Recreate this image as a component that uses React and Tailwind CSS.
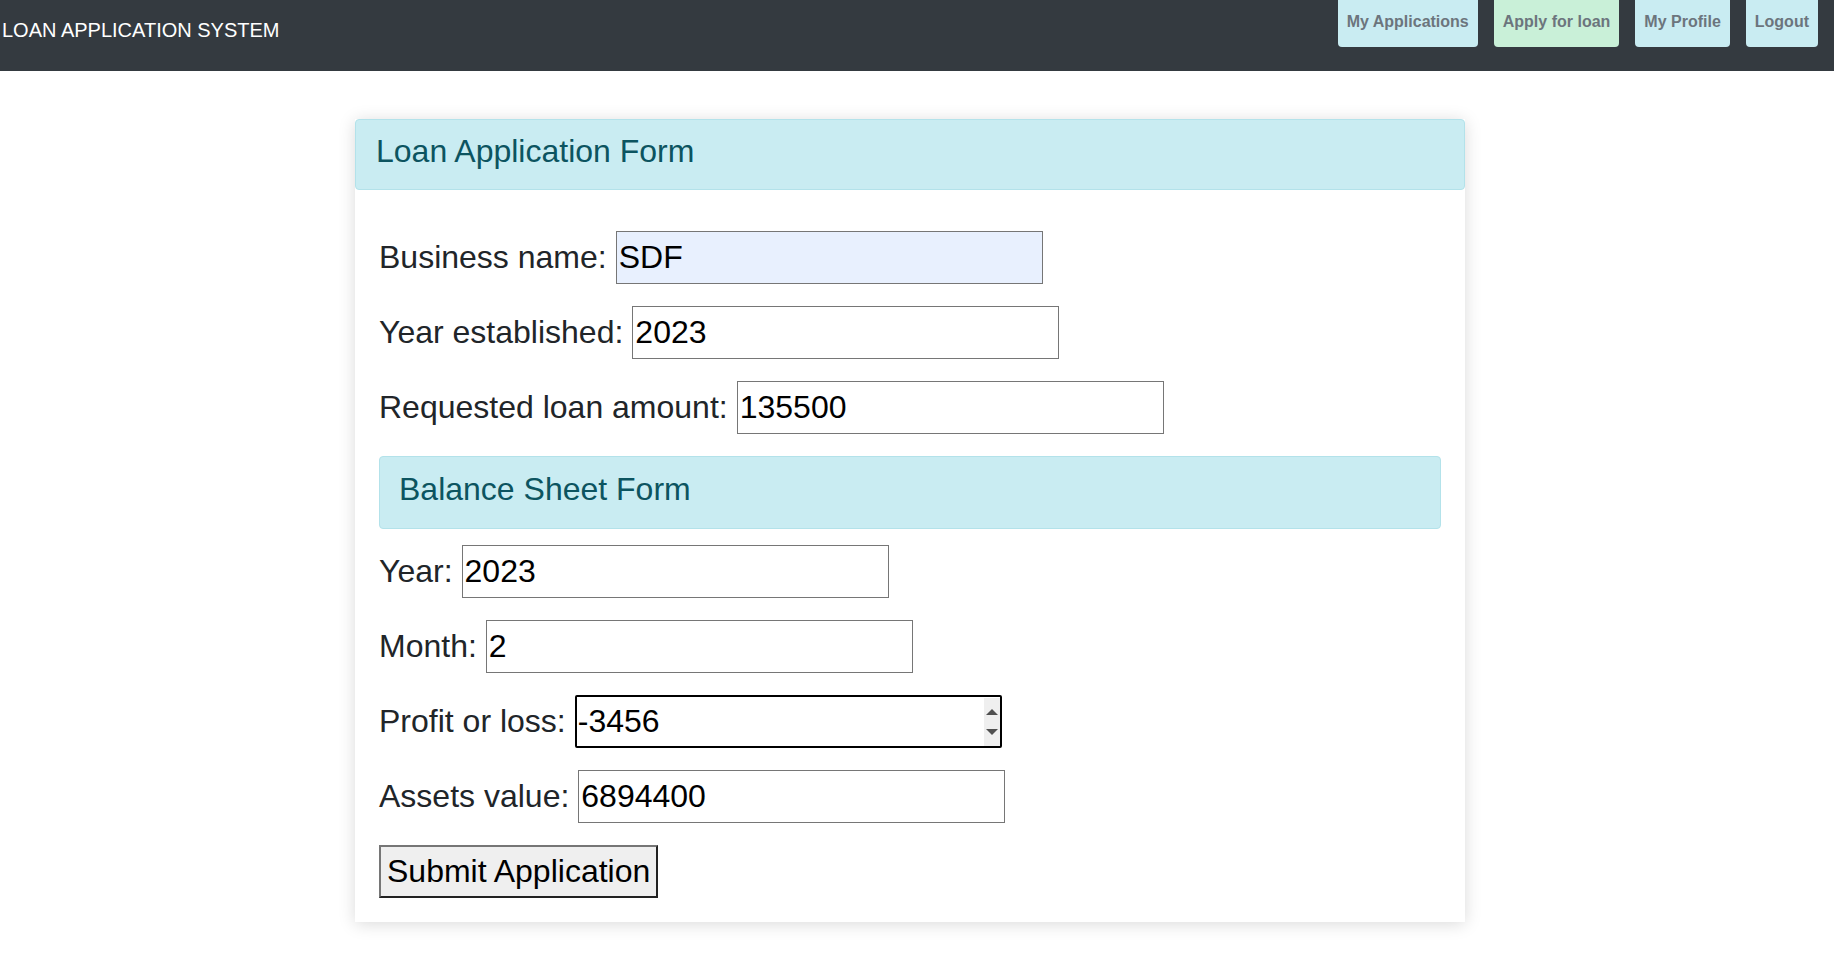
const navLinks = [
    { label: 'My Applications', active: false },
    { label: 'Apply for loan', active: true },
    { label: 'My Profile', active: false },
    { label: 'Logout', active: false },
];

function Field({ label, value, className = 'mt-[22px]', focused = false, autofilled = false }) {
    const base = 'block h-[53px] w-[427px] text-[32px] text-black outline-none';
    const look = focused
        ? 'rounded-[2px] border-2 border-black bg-white px-[1px]'
        : `border border-[#767676] px-[2px] ${autofilled ? 'bg-[#e8f0fe]' : 'bg-white'}`;

    return (
        <div className={`flex items-center gap-[9px] ${className}`}>
            <label className="whitespace-nowrap text-[32px] leading-[37px] text-[#212529]">
                {label}
            </label>
            <div className="relative">
                <input type="text" defaultValue={value} className={`${base} ${look}`} />
                {focused && (
                    <div className="absolute top-[3px] right-[2px] bottom-[2px] flex w-[16px] flex-col items-center justify-center gap-[14px] bg-[#efefef]">
                        <span className="h-0 w-0 border-x-[6px] border-b-[6px] border-x-transparent border-b-[#505050]" />
                        <span className="h-0 w-0 border-x-[6px] border-t-[6px] border-x-transparent border-t-[#505050]" />
                    </div>
                )}
            </div>
        </div>
    );
}

function SectionHeader({ children, className = '' }) {
    return (
        <div
            className={`rounded-[4px] border border-[#b3e2ea] bg-[#c9ecf2] text-[32px] leading-[37px] text-[#0c5460] ${className}`}
        >
            {children}
        </div>
    );
}

export default function App() {
    return (
        <div className="min-h-screen bg-white font-['Liberation_Sans',Arial,sans-serif]">
            <nav className="flex h-[71px] items-start justify-between bg-[#343a40]">
                <div className="pt-[19px] pl-[2px] text-[20px] leading-[23px] text-white">
                    LOAN APPLICATION SYSTEM
                </div>
                <div className="flex gap-4 pr-4">
                    {navLinks.map((link) => (
                        <a
                            key={link.label}
                            href="#"
                            className={`flex h-[47px] items-center rounded-b-[4px] px-[9px] pb-[3px] text-base font-bold text-[#6c757d] ${
                                link.active ? 'bg-[#c9f0d8]' : 'bg-[#c9ecf2]'
                            }`}
                        >
                            {link.label}
                        </a>
                    ))}
                </div>
            </nav>

            <div className="mt-[48px] ml-[355px] w-[1110px] bg-white shadow-[0_2px_16px_rgba(0,0,0,0.15)]">
                <SectionHeader className="h-[71px] px-[20px] pt-[13px]">
                    Loan Application Form
                </SectionHeader>
                <form className="flex flex-col px-6 pt-[41px] pb-6">
                    <Field label="Business name:" value="SDF" className="" autofilled />
                    <Field label="Year established:" value="2023" />
                    <Field label="Requested loan amount:" value="135500" />

                    <SectionHeader className="mt-[22px] h-[73px] px-[19px] pt-[14px]">
                        Balance Sheet Form
                    </SectionHeader>

                    <Field label="Year:" value="2023" className="mt-[16px]" />
                    <Field label="Month:" value="2" />
                    <Field label="Profit or loss:" value="-3456" focused />
                    <Field label="Assets value:" value="6894400" />

                    <div className="mt-[22px]">
                        <button
                            type="button"
                            className="h-[53px] border-2 border-t-[#767676] border-l-[#767676] border-r-[#222] border-b-[#222] bg-[#efefef] px-[6px] text-[32px] leading-[37px] text-black"
                        >
                            Submit Application
                        </button>
                    </div>
                </form>
            </div>
        </div>
    );
}
